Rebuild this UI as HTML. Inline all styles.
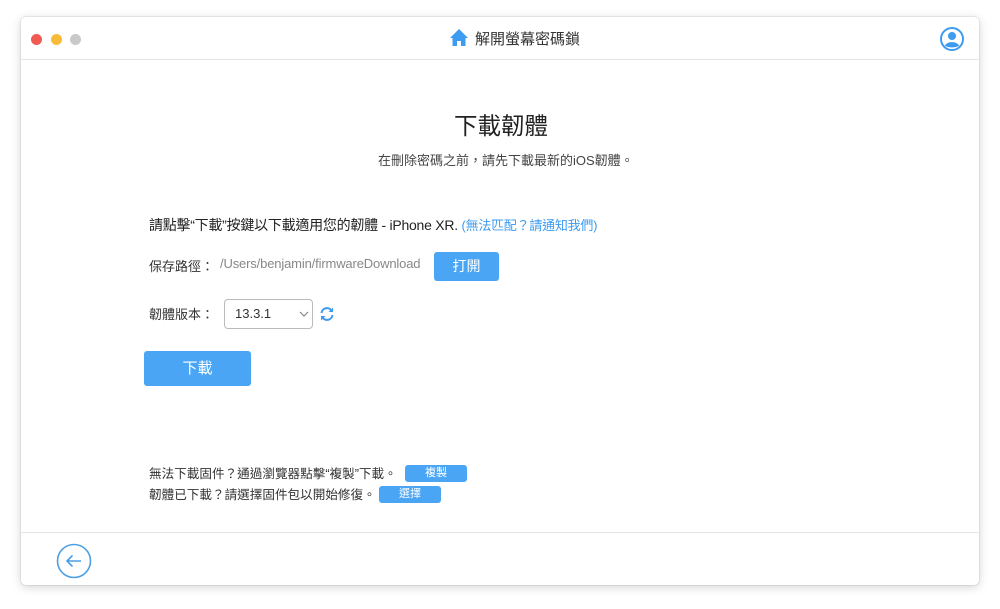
<!DOCTYPE html>
<html><head><meta charset="utf-8"><style>
*{margin:0;padding:0;box-sizing:border-box}
body{width:1000px;height:609px;background:#fff;font-family:"Liberation Sans","Noto Sans CJK TC",sans-serif;position:relative;overflow:hidden;color:#333}
.win{position:absolute;left:21px;top:17px;width:958px;height:568px;background:#fff;border-radius:5px;box-shadow:0 2px 10px rgba(0,0,0,.18),0 0 0 1px rgba(0,0,0,.06)}
.tb{position:absolute;left:0;top:0;width:100%;height:43px;border-bottom:1px solid #e4e4e4}
.dot{position:absolute;top:17px;width:11px;height:11px;border-radius:50%}
.a{position:absolute;white-space:nowrap}
.btn{position:absolute;background:#4ba5f5;color:#fff;border-radius:3px;text-align:center}
</style></head><body>
<div class="win">
 <div class="tb">
  <div class="dot" style="left:10px;background:#f05a52"></div>
  <div class="dot" style="left:30px;background:#f8bb36"></div>
  <div class="dot" style="left:49px;background:#c9c9c9"></div>
  <svg class="a" style="left:428px;top:11px" width="20" height="19" viewBox="0 0 20 19"><path d="M10 1 L19 10 L16.5 10 L16.5 18 L12 18 L12 13 L8 13 L8 18 L3.5 18 L3.5 10 L1 10 Z" fill="#3d9bf0"/></svg>
  <div class="a" style="left:454px;top:11px;font-size:15px;color:#333">解開螢幕密碼鎖</div>
  <svg class="a" style="left:919px;top:10px" width="24" height="24" viewBox="0 0 24 24"><circle cx="12" cy="12" r="11" fill="none" stroke="#3d9bf0" stroke-width="2"/><circle cx="12" cy="9" r="4" fill="#3d9bf0"/><path d="M5 18.5 C7 14 17 14 19 18.5 C17 21 7 21 5 18.5Z" fill="#3d9bf0"/></svg>
 </div>
 <div class="a" style="left:433px;top:90px;font-size:23.5px;color:#222">下載韌體</div>
 <div class="a" style="left:357px;top:133px;font-size:13px;color:#444">在刪除密碼之前，請先下載最新的iOS韌體。</div>
 <div class="a" style="left:128px;top:198px;font-size:14px;color:#222;letter-spacing:-0.25px">請點擊“下載”按鍵以下載適用您的韌體 - iPhone XR. <span style="color:#3d9bf0;font-size:13px">(無法匹配？請通知我們)</span></div>
 <div class="a" style="left:128px;top:239px;font-size:13px;color:#333">保存路徑：</div>
 <div class="a" style="left:199px;top:239px;font-size:13px;color:#888;letter-spacing:-0.15px">/Users/benjamin/firmwareDownload</div>
 <div class="btn" style="left:413px;top:235px;width:65px;height:29px;line-height:29px;font-size:14px">打開</div>
 <div class="a" style="left:128px;top:287px;font-size:13px;color:#333">韌體版本：</div>
 <div class="a" style="left:203px;top:282px;width:89px;height:30px;border:1px solid #bbb;border-radius:4px;font-size:13px;padding:6px 0 0 10px;color:#333">13.3.1<svg style="position:absolute;right:3px;top:11px" width="10" height="7" viewBox="0 0 10 7"><path d="M1 1 L5 5 L9 1" fill="none" stroke="#888" stroke-width="1.2"/></svg></div>
 <svg class="a" style="left:298px;top:289px" width="16" height="16" viewBox="0 0 16 16"><path d="M2.5 7 A5.5 5.5 0 0 1 12.5 4.5" fill="none" stroke="#3d9bf0" stroke-width="2"/><path d="M13.5 9 A5.5 5.5 0 0 1 3.5 11.5" fill="none" stroke="#3d9bf0" stroke-width="2"/><path d="M14 1.5 L14 6 L9.5 6Z" fill="#3d9bf0"/><path d="M2 14.5 L2 10 L6.5 10Z" fill="#3d9bf0"/></svg>
 <div class="btn" style="left:123px;top:334px;width:107px;height:35px;line-height:35px;font-size:15px">下載</div>
 <div class="a" style="left:128px;top:446px;font-size:12.6px;color:#333">無法下載固件？通過瀏覽器點擊“複製”下載。</div>
 <div class="btn" style="left:384px;top:448px;width:62px;height:17px;line-height:17px;font-size:11px">複製</div>
 <div class="a" style="left:128px;top:467px;font-size:12.6px;color:#333">韌體已下載？請選擇固件包以開始修復。</div>
 <div class="btn" style="left:358px;top:469px;width:62px;height:17px;line-height:17px;font-size:11px">選擇</div>
 <div class="a" style="left:0;top:515px;width:100%;border-top:1px solid #e4e4e4"></div>
 <svg class="a" style="left:35px;top:526px" width="36" height="36" viewBox="0 0 36 36"><circle cx="18" cy="18" r="16.5" fill="none" stroke="#4a9fe6" stroke-width="1.6"/><path d="M25 18 H11 M16.5 12.5 L11 18 L16.5 23.5" fill="none" stroke="#4a9fe6" stroke-width="1.6"/></svg>
</div>
</body></html>
